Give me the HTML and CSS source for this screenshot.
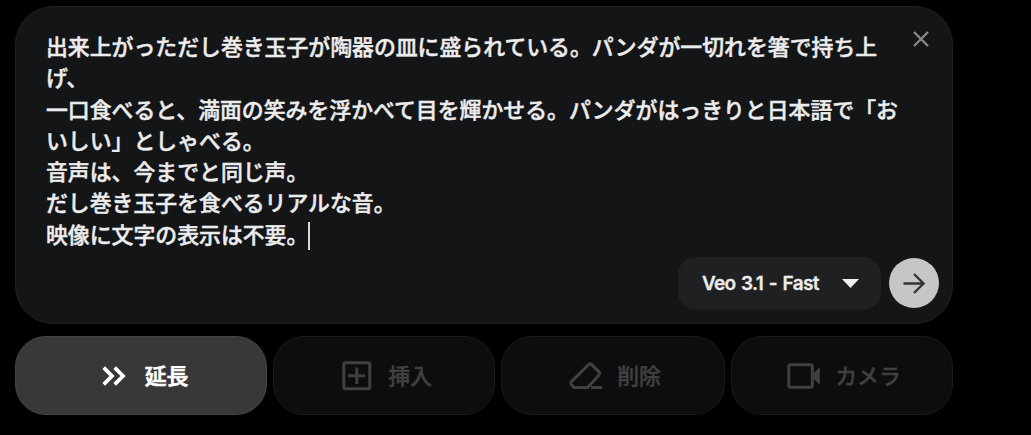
FILE: index.html
```html
<!DOCTYPE html>
<html lang="ja">
<head>
<meta charset="utf-8">
<title>Veo</title>
<link rel="stylesheet" href="styles.css">
</head>
<body>
<main class="composer">
  <section class="prompt">
    <div class="prompt-top">
      <div class="prompt-text">
        <p>出来上がっただし巻き玉子が陶器の皿に盛られている。パンダが一切れを箸で持ち上<br>げ、</p>
        <p>一口食べると、満面の笑みを浮かべて目を輝かせる。パンダがはっきりと日本語で「お<br>いしい」としゃべる。</p>
        <p>音声は、今までと同じ声。</p>
        <p>だし巻き玉子を食べるリアルな音。</p>
        <p>映像に文字の表示は不要。<span class="caret"></span></p>
      </div>
      <svg class="close" width="16" height="16" viewBox="0 0 16 16"><path d="M1 1l14 14M15 1L1 15"/></svg>
    </div>
    <div class="prompt-bar">
      <div class="model">
        <span>Veo 3.1 - Fast</span>
        <svg width="17" height="9" viewBox="0 0 17 9"><path d="M0 0h17L8.500 9z" fill="#f0f0f0"/></svg>
      </div>
      <div class="send">
        <svg width="22" height="21" viewBox="0 0 22 21"><path d="M.5 10.500H20M11 1l9.500 9.500L11 20"/></svg>
      </div>
    </div>
  </section>
  <nav class="actions">
    <div class="action active">
      <svg class="i-extend" width="24" height="20" viewBox="0 0 24 20"><path d="M1.700 1.700L10 10l-8.300 8.300M12.700 1.700L21 10l-8.300 8.300"/></svg>
      <span>延長</span>
    </div>
    <div class="action insert">
      <svg width="30" height="30" viewBox="0 0 30 30"><rect x="1.800" y="1.800" width="26" height="26" rx="1.500"/><path d="M14.800 6.500v16.500M6.500 14.800h16.500"/></svg>
      <span>挿入</span>
    </div>
    <div class="action">
      <svg width="34" height="28" viewBox="0 0 34 28"><path d="M5 25.500l-2.600-3Q1.200 21 2.400 19.600L19.600 2.600Q21.200 1.200 22.600 2.600l7.400 7.300Q31.300 11.300 30 12.900L18.700 25.500z"/><path d="M22 25.500h11"/></svg>
      <span>削除</span>
    </div>
    <div class="action">
      <svg width="34" height="26" viewBox="0 0 34 26"><rect x="1.800" y="1.800" width="23.500" height="22.400" rx="1.500"/><path class="solid" d="M25 11.500l7.800-7.300v17.600L25 14.500z"/></svg>
      <span>カメラ</span>
    </div>
  </nav>
</main>
</body>
</html>
```

FILE: styles.css
```css
* { box-sizing: border-box; }
body {
  margin: 0;
  background: #000;
  color: #ececec;
  font-family: "Noto Sans CJK JP", sans-serif;
}
p { margin: 0; }
svg { display: block; flex: none; fill: none; stroke-linejoin: round; }
.composer { width: 938px; margin: 6px 0 0 15px; }

.prompt {
  display: flex;
  flex-direction: column;
  justify-content: space-between;
  height: 318px;
  padding: 23px 13px 13px 30px;
  border: 1px solid #1f2021;
  border-radius: 38px;
  background: #141517;
}
.prompt-top { display: flex; justify-content: space-between; }
.prompt-text {
  font-size: 21.87px;
  font-weight: 500;
  line-height: 31.25px;
  white-space: nowrap;
  -webkit-text-stroke: 0.45px #ececec;
}
.caret {
  display: inline-block;
  width: 2px;
  height: 28px;
  vertical-align: -7px;
  background: #d8d8d8;
}
.close { margin: 1px 10px 0 0; stroke: #858687; stroke-width: 2.4; }

.prompt-bar { display: flex; justify-content: flex-end; align-items: center; gap: 8px; }
.model {
  display: flex;
  justify-content: space-between;
  align-items: center;
  width: 203px;
  height: 53px;
  padding: 0 22px 0 24px;
  border-radius: 18px;
  background: #1f2021;
  font-family: Inter, "Liberation Sans", sans-serif;
  font-size: 19px;
  font-weight: 600;
  letter-spacing: -0.7px;
  word-spacing: 1.6px;
  -webkit-text-stroke: 0.3px #ececec;
}
.send {
  display: flex;
  align-items: center;
  justify-content: center;
  width: 50px;
  height: 50px;
  margin-bottom: 1px;
  border-radius: 50%;
  background: #c6c6c6;
}
.send svg { stroke: #353535; stroke-width: 2.4; stroke-linejoin: miter; }

.actions {
  display: grid;
  grid-template-columns: 252px 222px 224px 222px;
  gap: 6px;
  margin-top: 12px;
}
.action {
  display: flex;
  align-items: center;
  justify-content: center;
  gap: 14px;
  height: 79px;
  padding-left: 4px;
  border: 1px solid #1b1b1b;
  border-radius: 31px;
  background: #0d0d0d;
  color: #404040;
  font-size: 21.87px;
  font-weight: 500;
  line-height: 32px;
}
.action span { margin-top: -2px; -webkit-text-stroke: 0.4px currentColor; }
.action svg { stroke: currentColor; stroke-width: 3; }
.action.insert { gap: 16px; padding-left: 6px; }
.action.active {
  gap: 19px;
  padding-left: 8px;
  border-color: #444;
  background: #383838;
  color: #fff;
}
.action.active span { -webkit-text-stroke-width: 0.7px; }
.action.active svg { stroke-width: 3.8; stroke-linejoin: miter; }
.action .solid { fill: currentColor; stroke: none; }
```
